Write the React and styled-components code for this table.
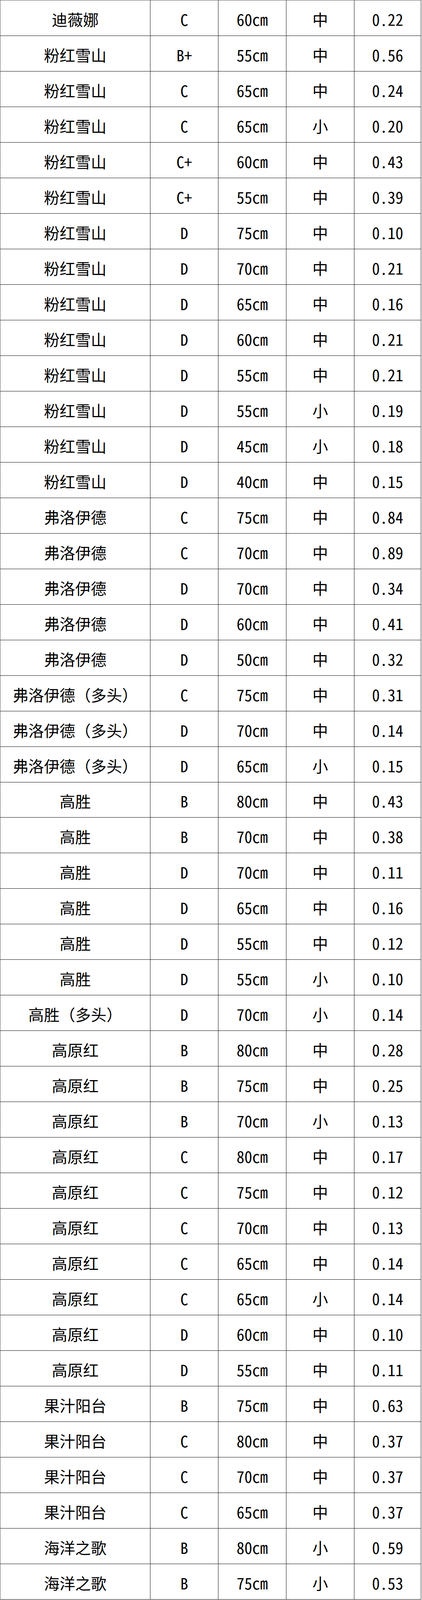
import React from 'react'
import styled, { createGlobalStyle, css } from 'styled-components'

const GlobalStyle = createGlobalStyle`
	html, body {
		margin: 0;
		padding: 0;
		background: #fff;
	}
`

const rows = [
	['迪薇娜', 'C', '60cm', '中', '0.22'],
	['粉红雪山', 'B+', '55cm', '中', '0.56'],
	['粉红雪山', 'C', '65cm', '中', '0.24'],
	['粉红雪山', 'C', '65cm', '小', '0.20'],
	['粉红雪山', 'C+', '60cm', '中', '0.43'],
	['粉红雪山', 'C+', '55cm', '中', '0.39'],
	['粉红雪山', 'D', '75cm', '中', '0.10'],
	['粉红雪山', 'D', '70cm', '中', '0.21'],
	['粉红雪山', 'D', '65cm', '中', '0.16'],
	['粉红雪山', 'D', '60cm', '中', '0.21'],
	['粉红雪山', 'D', '55cm', '中', '0.21'],
	['粉红雪山', 'D', '55cm', '小', '0.19'],
	['粉红雪山', 'D', '45cm', '小', '0.18'],
	['粉红雪山', 'D', '40cm', '中', '0.15'],
	['弗洛伊德', 'C', '75cm', '中', '0.84'],
	['弗洛伊德', 'C', '70cm', '中', '0.89'],
	['弗洛伊德', 'D', '70cm', '中', '0.34'],
	['弗洛伊德', 'D', '60cm', '中', '0.41'],
	['弗洛伊德', 'D', '50cm', '中', '0.32'],
	['弗洛伊德（多头）', 'C', '75cm', '中', '0.31'],
	['弗洛伊德（多头）', 'D', '70cm', '中', '0.14'],
	['弗洛伊德（多头）', 'D', '65cm', '小', '0.15'],
	['高胜', 'B', '80cm', '中', '0.43'],
	['高胜', 'B', '70cm', '中', '0.38'],
	['高胜', 'D', '70cm', '中', '0.11'],
	['高胜', 'D', '65cm', '中', '0.16'],
	['高胜', 'D', '55cm', '中', '0.12'],
	['高胜', 'D', '55cm', '小', '0.10'],
	['高胜（多头）', 'D', '70cm', '小', '0.14'],
	['高原红', 'B', '80cm', '中', '0.28'],
	['高原红', 'B', '75cm', '中', '0.25'],
	['高原红', 'B', '70cm', '小', '0.13'],
	['高原红', 'C', '80cm', '中', '0.17'],
	['高原红', 'C', '75cm', '中', '0.12'],
	['高原红', 'C', '70cm', '中', '0.13'],
	['高原红', 'C', '65cm', '中', '0.14'],
	['高原红', 'C', '65cm', '小', '0.14'],
	['高原红', 'D', '60cm', '中', '0.10'],
	['高原红', 'D', '55cm', '中', '0.11'],
	['果汁阳台', 'B', '75cm', '中', '0.63'],
	['果汁阳台', 'C', '80cm', '中', '0.37'],
	['果汁阳台', 'C', '70cm', '中', '0.37'],
	['果汁阳台', 'C', '65cm', '中', '0.37'],
	['海洋之歌', 'B', '80cm', '小', '0.59'],
	['海洋之歌', 'B', '75cm', '小', '0.53'],
]

// full viewport height, so the last row never falls off the bottom
const Sheet = styled.div`
	display: grid;
	grid-template-columns: 384px repeat(3, 174px) 1fr;
	grid-template-rows: repeat(${props => props.count}, minmax(0, 1fr));
	width: 1078px;
	height: calc(100vh - 1px);
	box-sizing: border-box;
	border-left: 1px solid #555;
	border-top: 1px solid #555;
	overflow: hidden;
	font-family: "Noto Sans CJK SC", "Noto Sans", sans-serif;
	font-size: 40px;
	color: #000;
`

const Cell = styled.div`
	display: flex;
	align-items: center;
	justify-content: center;
	padding-top: 6px;
	box-sizing: border-box;
	border-right: 1.5px solid #111;
	border-bottom: 1.5px solid #111;
	white-space: nowrap;
	line-height: 1;

	${props => props.$latin && css`
		font-feature-settings: "hwid" 1;
	`}
`

export default function App() {
	return (
		<>
			<GlobalStyle />
			<Sheet count={ rows.length }>
				{
					rows.map((row, i) => row.map((value, j) => (
						<Cell key={ i + '-' + j } $latin={ j > 0 }>{ value }</Cell>
					)))
				}
			</Sheet>
		</>
	)
}
